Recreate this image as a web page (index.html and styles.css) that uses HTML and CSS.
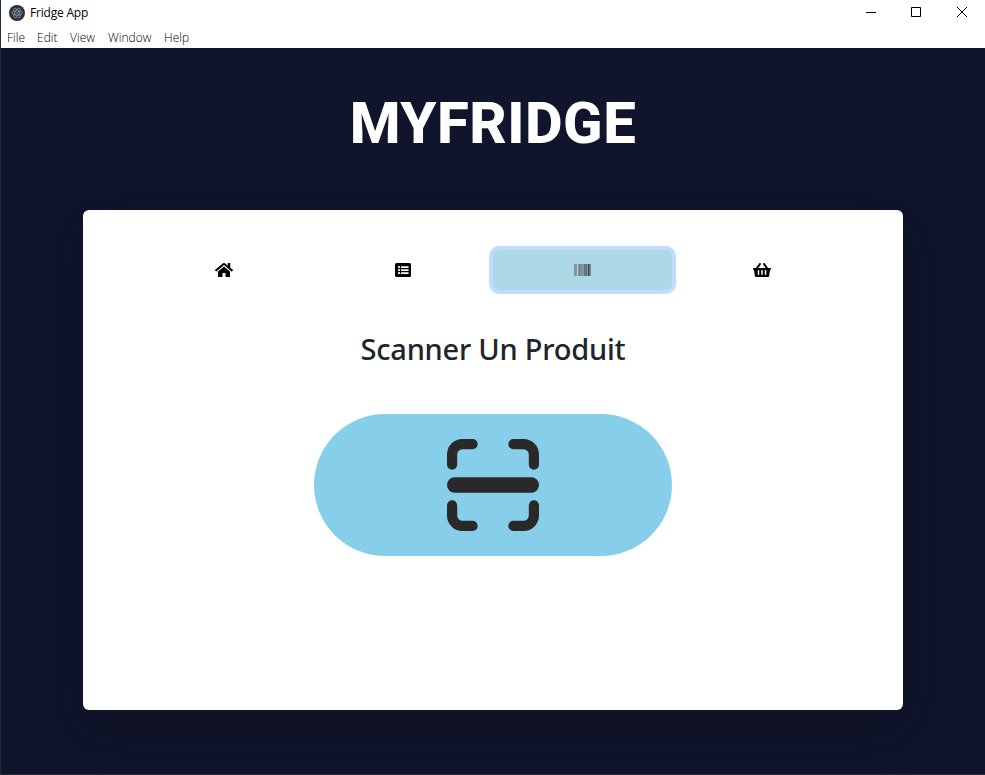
FILE: index.html
```html
<!DOCTYPE html>
<html lang="fr">
<head>
<meta charset="utf-8">
<title>Fridge App</title>
<link rel="stylesheet" href="styles.css">
</head>
<body>
<div class="window">
  <header class="titlebar">
    <svg class="app-icon" viewBox="0 0 16 16"><circle cx="8" cy="8" r="8" fill="#2b2e3a"/><g fill="none" stroke="#a9c5cc" stroke-width=".7" opacity=".8"><ellipse cx="8" cy="8" rx="5.400" ry="2.200"/><ellipse cx="8" cy="8" rx="5.400" ry="2.200" transform="rotate(60 8 8)"/><ellipse cx="8" cy="8" rx="5.400" ry="2.200" transform="rotate(120 8 8)"/></g><circle cx="8" cy="8" r=".7" fill="#a9c5cc"/></svg>
    <span class="app-title">Fridge App</span>
    <div class="controls">
      <svg viewBox="0 0 46 24"><path d="M11 12.500h10" /></svg>
      <svg viewBox="0 0 46 24"><path d="M10.500 7.500h9v9h-9z"/></svg>
      <svg viewBox="0 0 46 24"><path d="M10 7l10 10M20 7l-10 10"/></svg>
    </div>
  </header>
  <nav class="menubar"><span class="file">File</span><span class="edit">Edit</span><span class="view">View</span><span class="win">Window</span><span class="help">Help</span></nav>
  <main class="page">
    <h1 class="brand">MYFRIDGE</h1>
    <section class="card">
      <nav class="tabs">
        <button class="tab"><svg width="18" height="16" viewBox="0 0 576 512"><path d="M280.370 148.260L96 300.110V464a16 16 0 0 0 16 16l112.060-.290a16 16 0 0 0 15.920-16V368a16 16 0 0 1 16-16h64a16 16 0 0 1 16 16v95.640a16 16 0 0 0 16 16.050L464 480a16 16 0 0 0 16-16V300L295.670 148.260a12.190 12.190 0 0 0-15.300 0zM571.600 251.470L488 182.560V44.050a12 12 0 0 0-12-12h-56a12 12 0 0 0-12 12v72.610L318.470 43a48 48 0 0 0-61 0L4.340 251.470a12 12 0 0 0-1.600 16.900l25.500 31A12 12 0 0 0 45.150 301l235.220-193.740a12.190 12.190 0 0 1 15.300 0L530.900 301a12 12 0 0 0 16.900-1.600l25.500-31a12 12 0 0 0-1.700-16.930z"/></svg></button>
        <button class="tab"><svg width="16" height="16" viewBox="0 0 512 512"><rect y="32" width="512" height="448" rx="48"/><g fill="#fff"><circle cx="128" cy="160" r="36"/><circle cx="128" cy="256" r="36"/><circle cx="128" cy="352" r="36"/><rect x="192" y="132" width="240" height="56" rx="8"/><rect x="192" y="228" width="240" height="56" rx="8"/><rect x="192" y="324" width="240" height="56" rx="8"/></g></svg></button>
        <button class="tab active"><svg width="18" height="16" viewBox="0 0 18 16"><g transform="translate(.5 0)"><path fill="#81919b" d="M.5 2h1v12h-1z"/><path fill="#a28e99" d="M1.500 2h1v12h-1z"/><path fill="#6d9cb4" d="M2.500 2h1v12h-1z"/><path fill="#969b86" d="M4.500 2h1v12h-1z"/><path fill="#55838d" d="M5.500 2h1v12h-1z"/><path fill="#a28e99" d="M6.500 2h1v12h-1z"/><path fill="#758da6" d="M7.500 2h1v12h-1z"/><path fill="#9b9679" d="M8.500 2h1v12h-1z"/><path fill="#6f9fac" d="M9.500 2h1v12h-1z"/><path fill="#4f7e88" d="M10.500 2h2v12h-2z"/><path fill="#70686d" d="M12.500 2h1v12h-1z"/><path fill="#78a9be" d="M13.500 2h1v12h-1z"/><path fill="#493c42" d="M14.500 2h1v12h-1z"/><path fill="#73666d" d="M15.500 2h1v12h-1z"/><path fill="#6d8edb" d="M16.500 2h1v12h-1z"/></g></svg></button>
        <button class="tab basket"><svg width="18" height="16" viewBox="0 0 576 512"><path d="M576 216v16c0 13.255-10.745 24-24 24h-8l-26.113 182.788C514.509 462.435 494.257 480 470.370 480H105.630c-23.887 0-44.139-17.565-47.518-41.212L32 256h-8c-13.255 0-24-10.745-24-24v-16c0-13.255 10.745-24 24-24h67.341l106.780-146.821c10.395-14.292 30.407-17.453 44.701-7.058 14.293 10.395 17.453 30.408 7.058 44.701L170.477 192h235.046L326.120 82.821c-10.395-14.292-7.234-34.306 7.059-44.701 14.291-10.395 34.306-7.235 44.701 7.058L484.659 192H552c13.255 0 24 10.745 24 24z"/><g fill="#fff"><rect x="152" y="256" width="48" height="160" rx="24"/><rect x="264" y="256" width="48" height="160" rx="24"/><rect x="376" y="256" width="48" height="160" rx="24"/></g></svg></button>
      </nav>
      <h2 class="heading">Scanner Un Produit</h2>
      <button class="scan"><svg width="92" height="92" viewBox="0 0 92 92"><g fill="none" stroke="#292929" stroke-width="10.200" stroke-linecap="round"><path d="M5.100 25.600V15.400A10.300 10.300 0 0 1 15.400 5.100H25.600M66.400 5.100H76.600A10.300 10.300 0 0 1 86.900 15.400V25.600M86.900 66.400V76.600A10.300 10.300 0 0 1 76.600 86.900H66.400M25.600 86.900H15.400A10.300 10.300 0 0 1 5.100 76.600V66.400"/><path stroke-width="15.400" d="M7.700 46H84.300"/></g></svg></button>
    </section>
  </main>
</div>
</body>
</html>
```
FILE: styles.css
```css
* { box-sizing: border-box; }
body { margin: 0; height: 775px; overflow: hidden; background: #1d3038; padding: 0 0 1px 1px; font-family: "Open Sans", sans-serif; }
.window { height: 774px; display: flex; flex-direction: column; background: #fff; color: #000; }
.titlebar { height: 25px; display: flex; align-items: center; padding-left: 8px; }
.app-icon { width: 16px; height: 16px; }
.app-title { margin-left: 5px; font: 12px/16px "Open Sans", sans-serif; letter-spacing: -.2px; }
.controls { margin-left: auto; display: flex; height: 25px; width: 130px; }
.controls svg { flex: none; width: 46px; height: 24px; fill: none; stroke: #000; stroke-width: 1; }
.menubar { height: 23px; display: flex; padding-left: 6px; font-size: 12px; font-weight: 300; line-height: 25px; color: #000; }
.menubar span { white-space: nowrap; }
.file { width: 30px; }
.edit { width: 33px; }
.view { width: 38px; }
.win { width: 56px; }
.page { flex: 1; background: #10142c; display: flex; flex-direction: column; align-items: center; }
.brand { margin: 40px 0 0; height: 70px; color: #fff; font: 800 58px/70px Roboto, sans-serif; letter-spacing: .5px; }
.card { width: 820px; height: 500px; margin-top: 52px; padding: 40px 52px 0; background: #fff; border-radius: 6px; box-shadow: 0 16px 48px rgba(15, 16, 20, .3); display: flex; flex-direction: column; align-items: center; }
.tabs { width: 716px; display: grid; grid-template-columns: repeat(4, 1fr); }
.tab { height: 40px; padding: 0 1px 0 0; border: 0; border-radius: 6px; background: none; display: flex; align-items: center; justify-content: center; }
.basket { padding: 0; }
.active { background: #add8e6; box-shadow: 0 0 0 4px #c2dbfe; }
.heading { margin: 38px 0 0; height: 42px; font: 500 29px/42px "Noto Sans", sans-serif; letter-spacing: -.22px; color: #212529; white-space: nowrap; }
.scan { width: 358px; height: 142px; margin-top: 44px; padding: 0; border: 0; border-radius: 71px; background: #87ceeb; display: flex; align-items: center; justify-content: center; }
```
